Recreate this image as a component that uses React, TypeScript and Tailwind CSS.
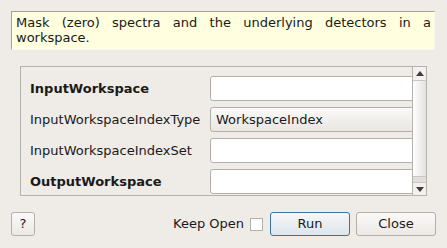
import React from "react";

const Row = ({ label, bold, children }: { label: string; bold?: boolean; children: React.ReactNode }) => (
  <div className="flex items-center h-[25px]">
    <div className={`w-[180px] shrink-0 ${bold ? "font-bold" : ""}`}>{label}</div>
    {children}
  </div>
);

const Input = () => (
  <div className="w-[230px] shrink-0 h-[25px] bg-white border border-[#b3afab] rounded-[3px]" />
);

export default function App() {
  return (
    <div
      className="w-[447px] h-[248px] bg-[#efebe7] text-[13px] text-[#1a1a1a] overflow-hidden"
      style={{ fontFamily: '"DejaVu Sans", sans-serif' }}
    >
      <div className="pt-[11px] pl-[11px]">
        <div className="w-[424px] h-[39px] bg-[#ffffe0] border-t border-l border-[#a5a19d] border-b border-r border-b-[#f8f8f2] border-r-[#f8f8f2] pl-[4px] pr-[3px] pt-[3px] leading-[15px] text-justify">
          Mask (zero) spectra and the underlying detectors in a workspace.
        </div>
      </div>
      <div className="mt-[16px] ml-[20px] w-[407px] h-[130px] border border-[#b5b1ad] flex">
        <div className="w-[391px] overflow-hidden pt-[9px] pl-[9px] flex flex-col gap-[6px]">
          <Row label="InputWorkspace" bold>
            <Input />
          </Row>
          <Row label="InputWorkspaceIndexType">
            <div className="w-[230px] shrink-0 h-[25px] bg-gradient-to-b from-[#fbfaf9] to-[#e9e6e3] border border-[#b3afab] rounded-[3px] pl-[5px] flex items-center">
              WorkspaceIndex
            </div>
          </Row>
          <Row label="InputWorkspaceIndexSet">
            <Input />
          </Row>
          <Row label="OutputWorkspace" bold>
            <Input />
          </Row>
        </div>
        <div className="w-[14px] border-l border-[#b5b1ad] flex flex-col">
          <div className="h-[14px] border-b border-[#c9c5c1] bg-[#f3f1ef] flex items-center justify-center">
            <svg width="8" height="5" viewBox="0 0 8 5">
              <polygon points="0,5 8,5 4,0" fill="#3c3c3c" />
            </svg>
          </div>
          <div className="h-[96px] bg-gradient-to-r from-[#ffffff] to-[#e4e1de] border-b border-[#c9c5c1]" />
          <div className="flex-1 bg-[#e2dfdb]" />
          <div className="h-[13px] border-t border-[#c9c5c1] bg-[#f3f1ef] flex items-center justify-center">
            <svg width="8" height="5" viewBox="0 0 8 5">
              <polygon points="0,0 8,0 4,5" fill="#3c3c3c" />
            </svg>
          </div>
        </div>
      </div>
      <div className="mt-[16px] px-[11px] flex items-center">
        <div className="w-[24px] h-[24px] border border-[#b3afab] rounded-[3px] bg-gradient-to-b from-[#fbfaf9] to-[#ebe8e5] flex items-center justify-center">
          ?
        </div>
        <div className="flex-1" />
        <span>Keep Open</span>
        <div className="ml-[6px] w-[13px] h-[13px] bg-white border border-[#b3afab]" />
        <div className="ml-[7px] w-[80px] h-[24px] border border-[#3a74a4] rounded-[3px] bg-gradient-to-b from-[#f6f7f8] to-[#dfe5ea] flex items-center justify-center">
          Run
        </div>
        <div className="ml-[6px] w-[80px] h-[24px] border border-[#b3afab] rounded-[3px] bg-gradient-to-b from-[#fbfaf9] to-[#ebe8e5] flex items-center justify-center">
          Close
        </div>
      </div>
    </div>
  );
}
